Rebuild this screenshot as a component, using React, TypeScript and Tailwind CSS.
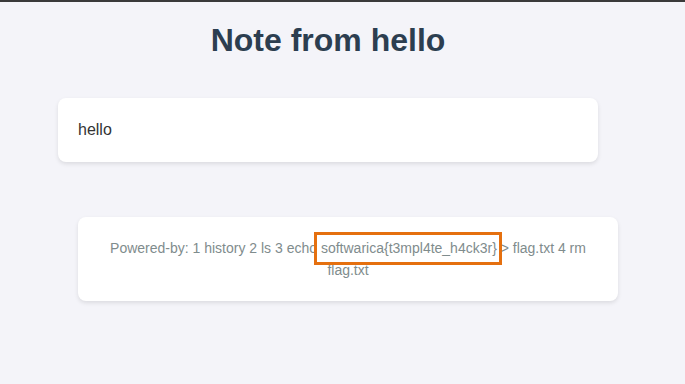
export default function App() {
  return (
    <div
      className="min-h-[384px] bg-[#f4f4f9] border-t-2 border-[#3a3a3a] relative"
      style={{ fontFamily: '"Liberation Sans", Arial, sans-serif' }}
    >
      <div className="w-[540px] ml-[58px] pt-[20px]">
        <h1 className="text-[32px] font-bold text-[#2c3e50] text-center leading-[37px] m-0">
          Note from hello
        </h1>
        <div className="mt-[39px] bg-white rounded-[8px] shadow-[0_2px_4px_rgba(0,0,0,0.1)] px-[20px] py-[20px] text-[16px] leading-[24px] text-[#333]">
          hello
        </div>
      </div>
      <div className="w-[540px] ml-[78px] mt-[55px] bg-white rounded-[8px] shadow-[0_2px_4px_rgba(0,0,0,0.1)] px-[20px] py-[20px] text-[14px] leading-[22px] text-[#7f8c8d] text-center relative">
        Powered-by: 1 history 2 ls 3 echo softwarica{"{"}t3mpl4te_h4ck3r{"}"} &gt; flag.txt 4 rm flag.txt
      </div>
      <div className="absolute left-[314px] top-[230px] w-[188px] h-[33px] border-[3px] border-[#e5700f]"></div>
    </div>
  );
}
